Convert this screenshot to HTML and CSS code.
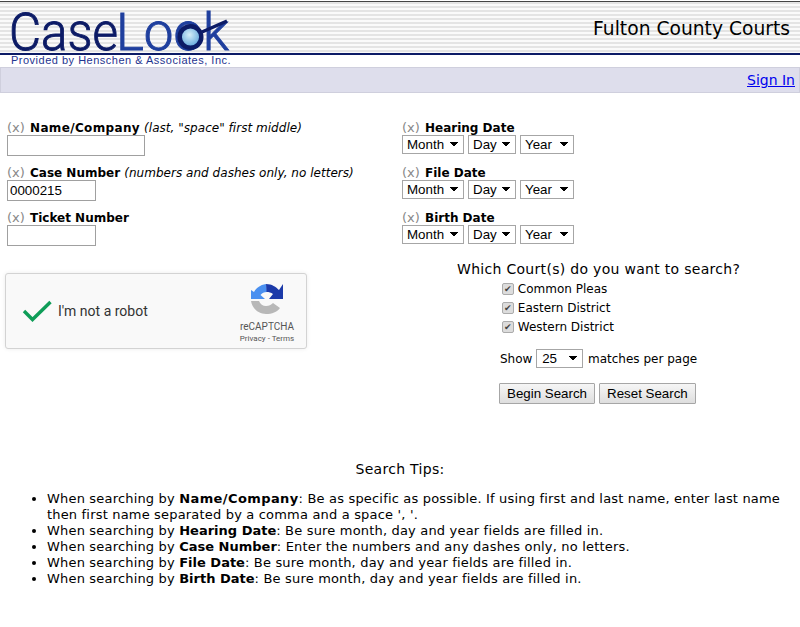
FILE: index.html
```html
<!DOCTYPE html>
<html lang="en">
<head>
<meta charset="utf-8">
<title>CaseLook - Fulton County Courts</title>
<link rel="stylesheet" href="styles.css">
</head>
<body>
<header class="masthead">
  <svg class="logo-art" width="240" height="51" viewBox="0 0 240 51" role="img" aria-label="CaseLook">
    <defs>
      <radialGradient id="glass" cx="0.45" cy="0.4" r="0.65">
        <stop offset="0" stop-color="#d6eef9"/>
        <stop offset="1" stop-color="#4f9ad6"/>
      </radialGradient>
    </defs>
    <text class="logo-dark" x="9" y="48" textLength="109" lengthAdjust="spacingAndGlyphs">Case</text>
    <text class="logo-blue" x="116" y="48" textLength="113" lengthAdjust="spacingAndGlyphs">Look</text>
    <line x1="202" y1="30" x2="227" y2="19" stroke="#0c1b66" stroke-width="3.500"/>
    <circle cx="190.500" cy="35" r="10.800" fill="url(#glass)" stroke="#0c1b66" stroke-width="4.500"/>
  </svg>
  <h1 class="court">Fulton County Courts</h1>
</header>
<div class="provided">Provided by Henschen &amp; Associates, Inc.</div>
<nav class="navbar"><a href="#">Sign In</a></nav>

<main class="search">
  <section class="columns">
    <div class="col-left">
      <div class="field">
        <div class="label"><span class="clear">(x)</span> <b class="wide">Name/Company</b> <i>(last, "space" first middle)</i></div>
        <input class="box box-wide" type="text">
      </div>
      <div class="field">
        <div class="label"><span class="clear">(x)</span> <b>Case Number</b> <i>(numbers and dashes only, no letters)</i></div>
        <input class="box" type="text" value="0000215">
      </div>
      <div class="field">
        <div class="label"><span class="clear">(x)</span> <b>Ticket Number</b></div>
        <input class="box" type="text">
      </div>
      <div class="captcha">
        <svg class="tick" width="30" height="22" viewBox="0 0 30 22"><path d="M2 11l8.500 8.500L28.500 2" fill="none" stroke="#0f9d58" stroke-width="3.400"/></svg>
        <span class="robot">I'm not a robot</span>
        <div class="rc">
          <svg class="rc-icon" width="32" height="30" viewBox="0 0 32 30">
            <path d="M0 15V6l3 2C5 4 9 1 15 0l1 8c-3 0-5 1-6.500 3L14 15z" fill="#4a90f0"/>
            <path d="M15 0c6 0 10 3 13 6l4-6v15H18l4-5c-2-1.500-4-2-6.500-2z" fill="#1c3aa9"/>
            <path d="M0 17h8c1 3 4 5 7 5s5-1 7-3l7 5c-3 4-8 6-14 6C7 30 1 24 0 17z" fill="#b8b8b8"/>
          </svg>
          <span class="rc-name">reCAPTCHA</span>
          <span class="rc-links">Privacy - Terms</span>
        </div>
      </div>
    </div>
    <div class="col-right">
      <div class="field">
        <div class="label"><span class="clear">(x)</span> <b>Hearing Date</b></div>
        <div class="dates">
          <select class="sel sel-month"><option>Month</option></select>
          <select class="sel sel-day"><option>Day</option></select>
          <select class="sel sel-year"><option>Year</option></select>
        </div>
      </div>
      <div class="field">
        <div class="label"><span class="clear">(x)</span> <b>File Date</b></div>
        <div class="dates">
          <select class="sel sel-month"><option>Month</option></select>
          <select class="sel sel-day"><option>Day</option></select>
          <select class="sel sel-year"><option>Year</option></select>
        </div>
      </div>
      <div class="field">
        <div class="label"><span class="clear">(x)</span> <b>Birth Date</b></div>
        <div class="dates">
          <select class="sel sel-month"><option>Month</option></select>
          <select class="sel sel-day"><option>Day</option></select>
          <select class="sel sel-year"><option>Year</option></select>
        </div>
      </div>
      <div class="courts">
        <div class="courts-title">Which Court(s) do you want to search?</div>
        <ul class="court-list">
          <li><label><input type="checkbox" checked> Common Pleas</label></li>
          <li><label><input type="checkbox" checked> Eastern District</label></li>
          <li><label><input type="checkbox" checked> Western District</label></li>
        </ul>
        <div class="perpage">Show <select class="sel sel-show"><option>25</option></select> matches per page</div>
        <div class="actions">
          <button class="btn" type="button">Begin Search</button>
          <button class="btn" type="button">Reset Search</button>
        </div>
      </div>
    </div>
  </section>

  <section class="tips">
    <h2>Search Tips:</h2>
    <ul>
      <li>When searching by <b class="wide">Name/Company</b>: Be as specific as possible. If using first and last name, enter last name then first name separated by a comma and a space ', '.</li>
      <li>When searching by <b>Hearing Date</b>: Be sure month, day and year fields are filled in.</li>
      <li>When searching by <b>Case Number</b>: Enter the numbers and any dashes only, no letters.</li>
      <li>When searching by <b>File Date</b>: Be sure month, day and year fields are filled in.</li>
      <li>When searching by <b>Birth Date</b>: Be sure month, day and year fields are filled in.</li>
    </ul>
  </section>
</main>
</body>
</html>
```

FILE: styles.css
```css
* { box-sizing: border-box; }
html, body { margin: 0; padding: 0; }
body {
  background: #fff;
  color: #000;
  font-family: "DejaVu Sans", Verdana, sans-serif;
  font-size: 13px;
  height: 627px;
  overflow: hidden;
}
.masthead {
  height: 54px;
  margin-top: 1px;
  border-top: 1px solid #444;
  border-bottom: 2px solid #0c1b66;
  background: repeating-linear-gradient(to bottom, #e4e4e4 0, #e4e4e4 2px, #fafafa 2px, #fafafa 4px);
  display: flex;
  justify-content: space-between;
  align-items: center;
}
.logo-art { display: block; flex: none; overflow: visible; }
.logo-dark, .logo-blue {
  font-family: Roboto, "Liberation Sans", sans-serif;
  font-weight: 300;
  font-size: 51px;
  stroke-width: 0.9px;
}
.logo-dark { fill: #0c1b66; stroke: #0c1b66; }
.logo-blue { fill: #1f3f9e; stroke: #1f3f9e; }
.court {
  margin: 2px 10px 0 0;
  font-size: 18.7px;
  font-weight: normal;
}
.provided {
  height: 12px;
  padding-left: 11px;
  font-family: "Liberation Sans", sans-serif;
  font-size: 11px;
  line-height: 11px;
  letter-spacing: 0.5px;
  color: #1f3590;
}
.navbar {
  height: 26px;
  background: #dedeec;
  border: 1px solid #cfcfdd;
  text-align: right;
  padding: 4px 4px 0 0;
  font-size: 14px;
}
.navbar a { color: #00e; }
.search { padding-top: 27px; }
.columns { display: flex; }
.col-left { width: 402px; padding-left: 7px; }
.col-right { width: 398px; }
.field { height: 45px; }
.label { height: 15px; font-size: 13px; line-height: 15px; }
.label b { font-size: 12px; margin-left: 1px; }
.label b.wide { letter-spacing: 0.35px; }
.clear { color: #888; }
.label i { font-size: 12px; letter-spacing: 0.03px; }
.box {
  display: block;
  width: 89px;
  height: 21px;
  border: 1px solid #a0a0a0;
  padding: 1px 2px;
  font-family: "Liberation Sans", sans-serif;
  font-size: 13.33px;
  background: #fff;
  color: #000;
}
.box-wide { width: 138px; }
.dates { display: flex; gap: 4px; }
.sel {
  appearance: none;
  -webkit-appearance: none;
  height: 19px;
  border: 1px solid #a6a6a6;
  border-radius: 0;
  background-color: #fff;
  background-image:
    linear-gradient(to top right, transparent 50%, #000 50%),
    linear-gradient(to top left, transparent 50%, #000 50%);
  background-size: 4px 5px, 4px 5px;
  background-position: calc(100% - 9px) 50%, calc(100% - 5px) 50%;
  background-repeat: no-repeat;
  font-family: "Liberation Sans", sans-serif;
  font-size: 13.33px;
  color: #000;
  padding: 0 0 0 4px;
}
.sel-month { width: 62px; }
.sel-day { width: 48px; }
.sel-year { width: 54px; }
.captcha {
  margin: 18px 0 0 -2px;
  width: 302px;
  height: 76px;
  background: #f9f9f9;
  border: 1px solid #d3d3d3;
  border-radius: 3px;
  box-shadow: 0 0 4px rgba(0,0,0,0.08);
  display: flex;
  align-items: center;
  padding-left: 16px;
}
.tick { margin-right: 6px; flex: none; }
.robot {
  font-family: Roboto, sans-serif;
  font-size: 14px;
  color: #333;
  margin-top: -1px;
}
.rc {
  margin: 0 4px 0 auto;
  width: 70px;
  display: flex;
  flex-direction: column;
  align-items: center;
  font-family: Roboto, sans-serif;
  color: #555;
  padding-top: 7px;
}
.rc-icon { display: block; margin-bottom: 6px; }
.rc-name { font-size: 10px; line-height: 13px; }
.rc-links { font-size: 8px; line-height: 12px; }
.courts { margin-top: 6px; }
.courts-title { margin-left: 55px; font-size: 14px; line-height: 17px; letter-spacing: 0.3px; }
.court-list { list-style: none; margin: 2px 0 0 100px; padding: 0; font-size: 12px; }
.court-list li { height: 19px; line-height: 19px; }
.court-list input {
  appearance: none;
  -webkit-appearance: none;
  display: inline-block;
  width: 12px;
  height: 12px;
  margin: 0;
  vertical-align: 1px;
  background: #dcdcdc;
  border: 1px solid #ababab;
  border-radius: 2px;
}
.court-list input::before {
  content: "\2714";
  display: block;
  font-size: 9px;
  line-height: 10px;
  text-align: center;
  color: #444;
}
.perpage { margin: 12px 0 0 98px; font-size: 12px; height: 21px; }
.sel-show { width: 47px; margin: 0 1px 0 0; padding-left: 5px; }
.actions { margin: 13px 0 0 97px; display: flex; gap: 4px; }
.btn {
  height: 21px;
  padding: 0 7px;
  border: 1px solid #a6a6a6;
  border-radius: 1px;
  background: linear-gradient(#f6f6f6, #dedede);
  font-family: "Liberation Sans", sans-serif;
  font-size: 13.33px;
  color: #000;
}
.tips { margin-top: 57px; }
.tips h2 {
  margin: 0;
  font-size: 14px;
  font-weight: normal;
  text-align: center;
  line-height: 17px;
  letter-spacing: 0.3px;
}
.tips ul { margin: 13px 0 0; padding: 0 15px 0 47px; font-size: 13px; line-height: 16px; letter-spacing: 0.18px; }
.tips b { letter-spacing: 0; }
.tips b.wide { letter-spacing: 0.4px; }
```
